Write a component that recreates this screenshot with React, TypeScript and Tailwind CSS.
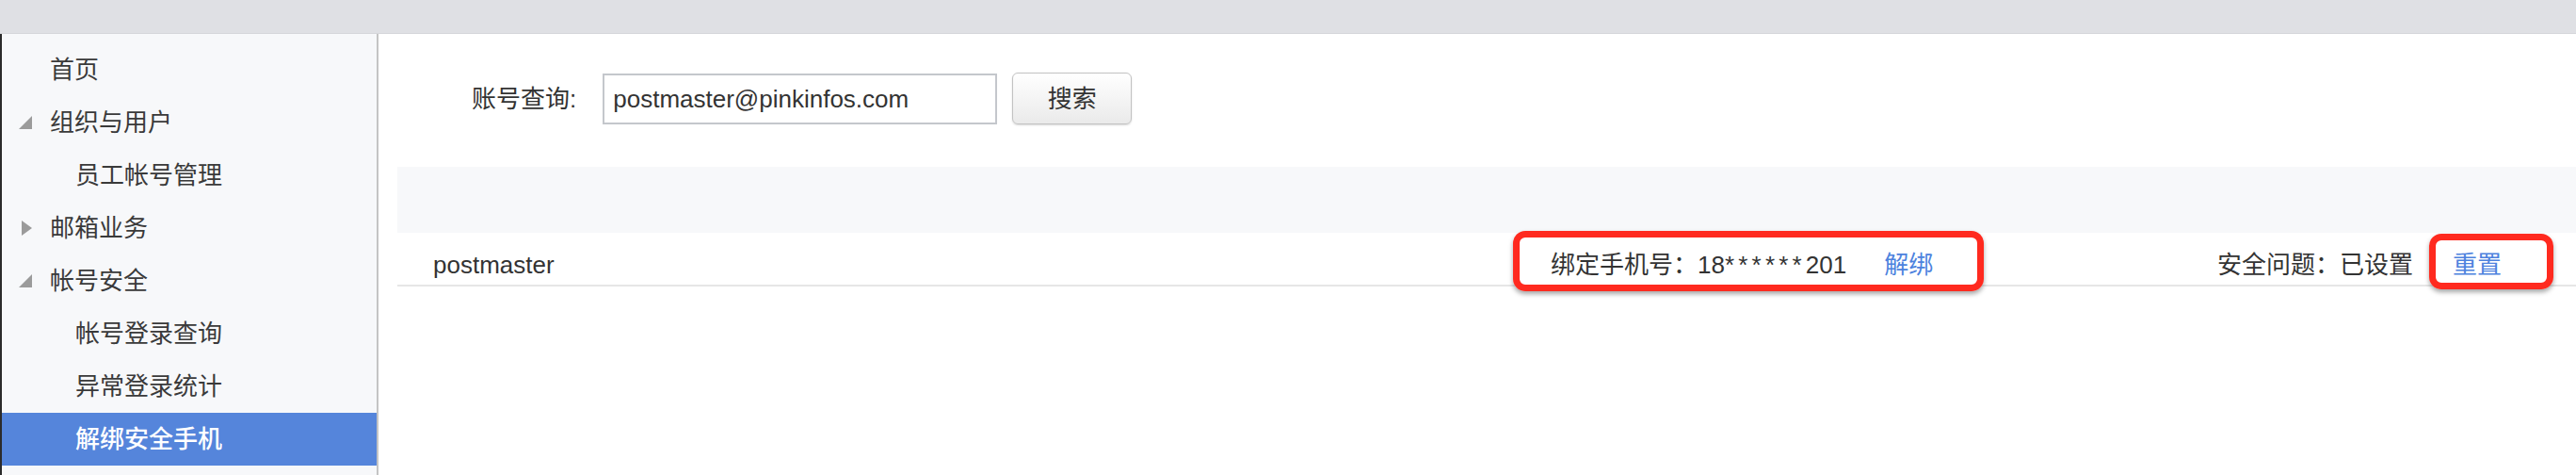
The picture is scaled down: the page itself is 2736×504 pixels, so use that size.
import React from "react";

const Expanded = () => (
  <svg width="14" height="14" viewBox="0 0 14 14" className="block">
    <polygon points="14,0 14,14 0,14" fill="#9b9b9b" />
  </svg>
);

const Collapsed = () => (
  <svg width="11" height="16" viewBox="0 0 11 16" className="block">
    <polygon points="0,0 11,8 0,16" fill="#9b9b9b" />
  </svg>
);

type Item = { label: string; level: 0 | 1; icon?: "exp" | "col"; active?: boolean };

const items: Item[] = [
  { label: "首页", level: 0 },
  { label: "组织与用户", level: 0, icon: "exp" },
  { label: "员工帐号管理", level: 1 },
  { label: "邮箱业务", level: 0, icon: "col" },
  { label: "帐号安全", level: 0, icon: "exp" },
  { label: "帐号登录查询", level: 1 },
  { label: "异常登录统计", level: 1 },
  { label: "解绑安全手机", level: 1, active: true },
];

export default function App() {
  return (
    <div className="w-[2736px] h-[504px] flex flex-col bg-white overflow-hidden font-['Liberation_Sans','Noto_Sans_CJK_SC',sans-serif] text-[26px] text-[#333333]">
      <div className="h-[36px] shrink-0 bg-[#dfe0e4] border-b border-[#d5d6da]" />
      <div className="flex flex-1 min-h-0">
        <aside className="w-[402px] shrink-0 bg-[#f7f8fa] border-l-2 border-l-[#2b2b2b] border-r-2 border-r-[#c4c4c4] pt-[10px]">
          {items.map((it) => (
            <div
              key={it.label}
              className={
                "h-[56px] flex items-center " +
                (it.active ? "bg-[#5585db] text-white font-medium" : "text-[#3a3a3a]")
              }
            >
              {it.level === 0 ? (
                <div className="flex items-center pl-[18px]">
                  <div className="w-[14px] h-[16px] flex items-center justify-end">
                    {it.icon === "exp" ? <Expanded /> : it.icon === "col" ? <Collapsed /> : null}
                  </div>
                  <span className="ml-[19px] leading-none">{it.label}</span>
                </div>
              ) : (
                <span className="pl-[78px] leading-none">{it.label}</span>
              )}
            </div>
          ))}
        </aside>
        <main className="flex-1 min-w-0 pt-[41px]">
          <div className="flex items-center pl-[99px]">
            <span className="leading-none mr-[28px]">账号查询:</span>
            <div className="w-[419px] h-[54px] border-2 border-[#c4c7cc] bg-white flex items-center px-[9px] leading-none">
              postmaster@pinkinfos.com
            </div>
            <button className="ml-[16px] w-[127px] h-[55px] rounded-[6px] border border-[#c2c2c2] bg-gradient-to-b from-white to-[#eaeaea] shadow-[0_1px_2px_rgba(0,0,0,0.15)] flex items-center justify-center leading-none text-[#333333]">
              搜索
            </button>
          </div>
          <div className="ml-[20px] mt-[45px] h-[70px] bg-[#f7f8fa]" />
          <div className="ml-[20px] relative h-[57px] border-b-2 border-[#e6e6e6] flex items-center pt-[12px]">
            <div className="w-[1225px] shrink-0 pl-[38px] leading-none">postmaster</div>
            <div className="flex items-center leading-none">
              <span>绑定手机号：18<span className="tracking-[4.2px]">******</span>201</span>
              <span className="ml-[40px] text-[#4d82de]">解绑</span>
            </div>
            <div className="ml-auto flex items-center leading-none pr-[79px]">
              <span>安全问题：已设置</span>
              <span className="ml-[42px] text-[#4d82de]">重置</span>
            </div>
            <div className="absolute left-[1185px] top-[-2px] w-[500px] h-[64px] border-[7px] border-[#ff2a1f] rounded-[13px] shadow-[0_3px_5px_rgba(0,0,0,0.35)]" />
            <div className="absolute left-[2158px] top-[1px] w-[132px] h-[59px] border-[7px] border-[#ff2a1f] rounded-[13px] shadow-[0_3px_5px_rgba(0,0,0,0.35)]" />
          </div>
        </main>
      </div>
    </div>
  );
}
